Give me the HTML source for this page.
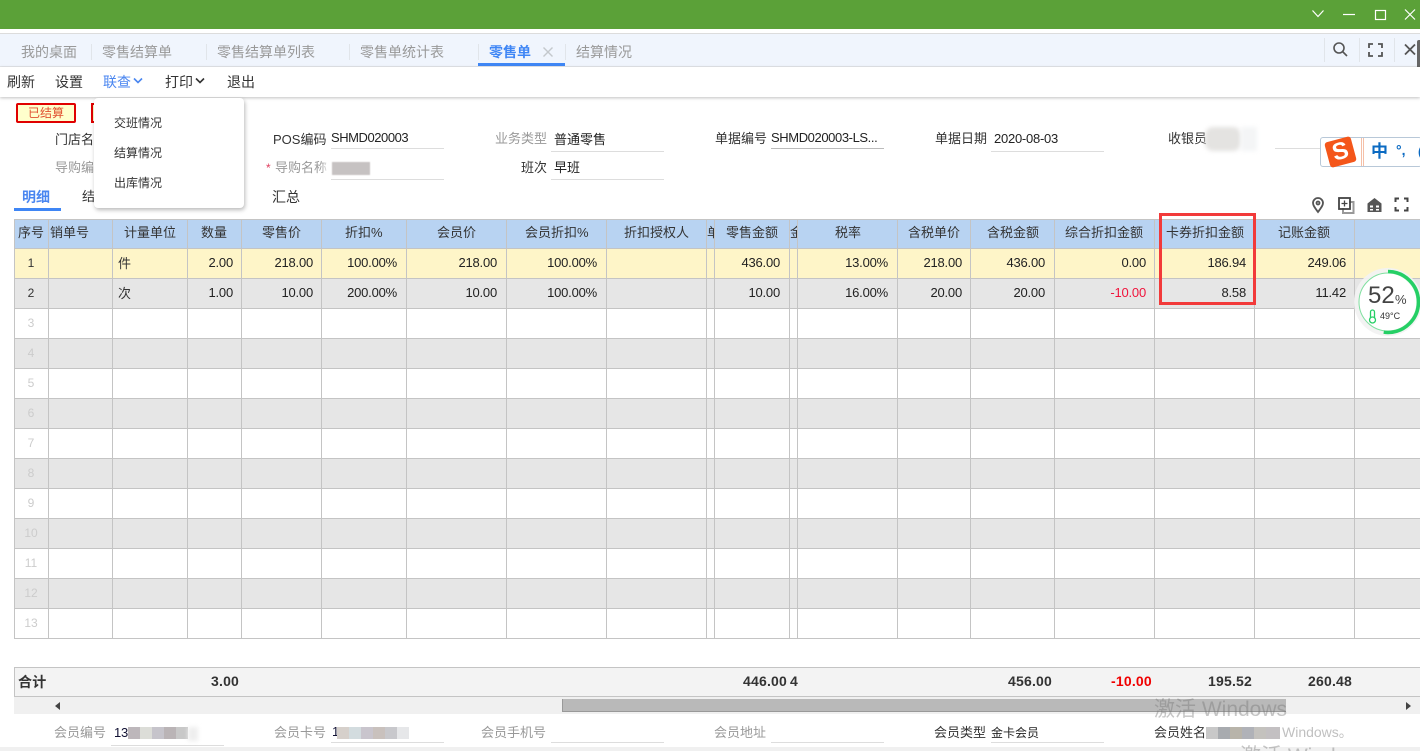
<!DOCTYPE html>
<html lang="zh">
<head>
<meta charset="utf-8">
<title>零售单</title>
<style>
html,body{margin:0;padding:0;background:#fff;}
html{width:1420px;height:751px;overflow:hidden;}
body{width:1420px;height:751px;overflow:hidden;position:relative;font-family:"Liberation Sans","Noto Sans CJK SC",sans-serif;font-size:13px;color:#333;}
div,span{position:absolute;box-sizing:border-box;}
.t{white-space:nowrap;line-height:18px;}
.g{color:#999;}
.tab{font-size:14px;color:#999;top:43px;white-space:nowrap;line-height:18px;}
.sep{width:1px;background:#e1e5ea;top:44px;height:16px;}
.m{font-size:14px;top:73px;color:#333;white-space:nowrap;line-height:18px;}
.ul{height:1px;background:#ddd;}
.v{width:1px;top:219px;height:420px;background:#c4c4c4;}
.h{left:14px;width:1406px;height:1px;background:#c4c4c4;}
.r{left:14px;width:1406px;height:30px;}
.th{top:224px;line-height:18px;white-space:nowrap;text-align:center;color:#333;}
.n{line-height:30px;height:30px;white-space:nowrap;font-size:13px;letter-spacing:-.2px;color:#222;text-align:right;}
.a{top:248px;}
.b{top:278px;}
.idx{left:14px;width:34px;text-align:center;line-height:30px;font-size:12px;color:#ccc;}
.s{line-height:18px;font-weight:bold;font-size:14px;color:#333;white-space:nowrap;letter-spacing:.2px;}
.blur{filter:blur(2px);}
.val{font-size:13px;color:#222;}
</style>
</head>
<body>
<div style="left:0;top:0;width:1420px;height:29px;background:#5ba138;"></div>
<svg style="position:absolute;left:1300px;top:0;" width="120" height="29" fill="none" stroke="#fff" stroke-width="1.2">
<path d="M12.5 10.500l5.500 6 5.500-6"/><path d="M43 14.500h12"/><rect x="75.500" y="10.500" width="10" height="9"/><path d="M105 9.500l10 10m0-10l-10 10"/>
</svg>

<div style="left:0;top:33px;width:1420px;height:34px;background:#f0f5fd;border-top:1px solid #dcdcdc;border-bottom:1px solid #e4e6ea;"></div>
<span class="tab" style="left:21px;">我的桌面</span><div class="sep" style="left:91px;"></div>
<span class="tab" style="left:102px;">零售结算单</span><div class="sep" style="left:206px;"></div>
<span class="tab" style="left:217px;">零售结算单列表</span><div class="sep" style="left:349px;"></div>
<span class="tab" style="left:360px;">零售单统计表</span><div class="sep" style="left:478px;"></div>
<span class="tab" style="left:489px;color:#3f86f5;font-weight:bold;">零售单</span>
<svg style="position:absolute;left:541px;top:45px;" width="14" height="14" fill="none" stroke="#c4c8cc" stroke-width="1.4"><path d="M2.500 2.500l9 9m0-9l-9 9"/></svg>
<div style="left:478px;top:63px;width:87px;height:3px;background:#3f86f5;"></div>
<div class="sep" style="left:565px;"></div>
<span class="tab" style="left:576px;">结算情况</span>
<div class="sep" style="left:1324px;top:38px;height:24px;"></div><div class="sep" style="left:1359px;top:38px;height:24px;"></div><div class="sep" style="left:1394px;top:38px;height:24px;"></div>
<svg style="position:absolute;left:1330px;top:40px;" width="90" height="20" fill="none" stroke="#555" stroke-width="1.6">
<circle cx="9" cy="8" r="5"/><path d="M13 12l4 4"/>
<path d="M39 8V4h4m5 0h4v4m0 4v4h-4m-5 0h-4v-4" stroke-width="1.800"/>
<path d="M75 4.500l10 10m0-10l-10 10" stroke-width="1.800"/>
</svg>
<div style="left:1417px;top:40px;width:3px;height:56px;background:#666;border-radius:2px 0 0 2px;"></div>

<div style="left:0;top:67px;width:1420px;height:30px;background:#fff;box-shadow:0 1px 3px rgba(0,0,0,.25);"></div>
<span class="m" style="left:7px;">刷新</span>
<span class="m" style="left:55px;">设置</span>
<span class="m" style="left:103px;color:#4a86f0;">联查</span>
<svg style="position:absolute;left:133px;top:77px;" width="10" height="8" fill="none" stroke="#4a86f0" stroke-width="1.6"><path d="M1 1.500l4 4 4-4"/></svg>
<span class="m" style="left:165px;">打印</span>
<svg style="position:absolute;left:195px;top:77px;" width="10" height="8" fill="none" stroke="#333" stroke-width="1.6"><path d="M1 1.500l4 4 4-4"/></svg>
<span class="m" style="left:227px;">退出</span>

<div style="left:16px;top:103px;width:60px;height:20px;background:#ffffcc;border:2px solid #e00000;border-radius:2px;text-align:center;line-height:16px;font-size:12px;color:#e05030;">已结算</div>
<div style="left:91px;top:103px;width:10px;height:20px;background:#ffffcc;border:2px solid #e00000;border-right:0;"></div>

<span class="t" style="left:55px;top:131px;">门店名</span>
<span class="t g" style="left:55px;top:159px;">导购编</span>
<span class="t" style="left:273px;top:131px;">POS编码</span>
<span class="t val" style="left:331px;top:129px;letter-spacing:-.45px;">SHMD020003</span>
<div class="ul" style="left:331px;top:148px;width:113px;"></div>
<span class="t" style="left:266px;top:159px;color:#e04060;font-size:12px;">*</span>
<span class="t g" style="left:275px;top:159px;">导购名称</span>
<div style="left:325px;top:153px;width:50px;height:24px;background:#fff;filter:blur(3px);"></div>
<div style="left:332px;top:162px;width:38px;height:13px;background:#c6c2c2;filter:blur(.6px);"></div>
<div class="ul" style="left:331px;top:179px;width:113px;"></div>
<span class="t g" style="left:495px;top:130px;">业务类型</span>
<span class="t val" style="left:554px;top:131px;">普通零售</span>
<div class="ul" style="left:551px;top:151px;width:113px;"></div>
<span class="t" style="left:521px;top:159px;">班次</span>
<span class="t val" style="left:554px;top:159px;">早班</span>
<div class="ul" style="left:551px;top:179px;width:113px;"></div>
<span class="t" style="left:715px;top:130px;">单据编号</span>
<span class="t val" style="left:771px;top:129px;letter-spacing:-.4px;">SHMD020003-LS...</span>
<div class="ul" style="left:771px;top:148px;width:113px;background:#bbb;"></div>
<span class="t" style="left:935px;top:130px;">单据日期</span>
<span class="t val" style="left:994px;top:130px;letter-spacing:-.25px;">2020-08-03</span>
<div class="ul" style="left:991px;top:151px;width:113px;"></div>
<span class="t" style="left:1168px;top:130px;">收银员</span>
<div class="ul" style="left:1275px;top:148px;width:46px;"></div>
<div class="blur" style="left:1205px;top:127px;width:36px;height:24px;background:#e4e3e1;border-radius:8px;"></div>
<div class="blur" style="left:1241px;top:127px;width:16px;height:24px;background:#f4f5f6;"></div>

<span class="t" style="left:22px;top:188px;color:#4a86f0;font-weight:bold;font-size:14px;">明细</span>
<div style="left:14px;top:208px;width:47px;height:3px;background:#3f86f5;"></div>
<span class="t" style="left:82px;top:188px;font-size:13px;">结</span>
<span class="t" style="left:272px;top:188px;font-size:14px;">汇总</span>
<svg style="position:absolute;left:1308px;top:195px;" width="106" height="20" fill="none" stroke="#555" stroke-width="1.800">
<path d="M10 17c-3-4-5-6.500-5-9a5 5 0 0 1 10 0c0 2.500-2 5-5 9z"/><circle cx="10" cy="8" r="1.500"/>
<path d="M41 7h4.500v11H35v-4h-1" stroke="#999" stroke-width="2"/>
<rect x="31" y="3" width="11" height="11" stroke="#444"/><path d="M36.500 5.500v6M33.500 8.500h6" stroke-width="1.300" stroke="#444"/>
<path d="M66.500 3l7 5.500V17h-14V8.500z" fill="#555" stroke="none"/><path d="M62 10.500h3v2h-3zM68 10.500h3v2h-3zM62 14h3v1.500h-3zM68 14h3v1.500h-3z" fill="#fff" stroke="none"/>
<path d="M87.500 7V3.500H91m5 0h3.500V7m0 5v3.500H96m-5 0h-3.500V12" stroke-width="2" stroke="#444"/>
</svg>

<!-- table -->
<div style="left:14px;top:219px;width:1406px;height:29px;background:#b8d3f2;"></div>
<div class="r" style="top:248px;background:#fef5c8;"></div>
<div class="r" style="top:278px;background:#e6e6e6;"></div>
<div class="r" style="top:338px;background:#e6e6e6;"></div>
<div class="r" style="top:398px;background:#e6e6e6;"></div>
<div class="r" style="top:458px;background:#e6e6e6;"></div>
<div class="r" style="top:518px;background:#e6e6e6;"></div>
<div class="r" style="top:578px;background:#e6e6e6;"></div>

<div class="h" style="top:219px;"></div><div class="h" style="top:248px;"></div><div class="h" style="top:278px;"></div><div class="h" style="top:308px;"></div><div class="h" style="top:338px;"></div><div class="h" style="top:368px;"></div><div class="h" style="top:398px;"></div><div class="h" style="top:428px;"></div><div class="h" style="top:458px;"></div><div class="h" style="top:488px;"></div><div class="h" style="top:518px;"></div><div class="h" style="top:548px;"></div><div class="h" style="top:578px;"></div><div class="h" style="top:608px;"></div><div class="h" style="top:638px;"></div>

<div class="v" style="left:14px;"></div><div class="v" style="left:48px;"></div><div class="v" style="left:112px;"></div><div class="v" style="left:187px;"></div><div class="v" style="left:241px;"></div><div class="v" style="left:321px;"></div><div class="v" style="left:406px;"></div><div class="v" style="left:506px;"></div><div class="v" style="left:606px;"></div><div class="v" style="left:706px;"></div><div class="v" style="left:714px;"></div><div class="v" style="left:789px;"></div><div class="v" style="left:797px;"></div><div class="v" style="left:897px;"></div><div class="v" style="left:970px;"></div><div class="v" style="left:1054px;"></div><div class="v" style="left:1154px;"></div><div class="v" style="left:1254px;"></div><div class="v" style="left:1354px;"></div>

<span class="th" style="left:18px;">序号</span>
<span class="th" style="left:50px;">销单号</span>
<span class="th" style="left:124px;">计量单位</span>
<span class="th" style="left:201px;">数量</span>
<span class="th" style="left:262px;">零售价</span>
<span class="th" style="left:345px;">折扣%</span>
<span class="th" style="left:437px;">会员价</span>
<span class="th" style="left:525px;">会员折扣%</span>
<span class="th" style="left:624px;">折扣授权人</span>
<div style="left:707px;top:220px;width:7px;height:28px;overflow:hidden;"><span class="th" style="left:0;top:4px;">单</span></div>
<span class="th" style="left:726px;">零售金额</span>
<div style="left:790px;top:220px;width:7px;height:28px;overflow:hidden;"><span class="th" style="left:0;top:4px;">金</span></div>
<span class="th" style="left:835px;">税率</span>
<span class="th" style="left:908px;">含税单价</span>
<span class="th" style="left:987px;">含税金额</span>
<span class="th" style="left:1065px;">综合折扣金额</span>
<span class="th" style="left:1166px;">卡券折扣金额</span>
<span class="th" style="left:1278px;">记账金额</span>

<span class="idx a" style="color:#333;">1</span>
<span class="idx b" style="color:#333;">2</span>
<span class="t" style="left:118px;top:255px;">件</span>
<span class="t" style="left:118px;top:285px;">次</span>

<span class="n a" style="left:183px;width:50px;">2.00</span><span class="n b" style="left:183px;width:50px;">1.00</span>
<span class="n a" style="left:253px;width:60px;">218.00</span><span class="n b" style="left:253px;width:60px;">10.00</span>
<span class="n a" style="left:327px;width:70px;">100.00%</span><span class="n b" style="left:327px;width:70px;">200.00%</span>
<span class="n a" style="left:437px;width:60px;">218.00</span><span class="n b" style="left:437px;width:60px;">10.00</span>
<span class="n a" style="left:527px;width:70px;">100.00%</span><span class="n b" style="left:527px;width:70px;">100.00%</span>
<span class="n a" style="left:720px;width:60px;">436.00</span><span class="n b" style="left:720px;width:60px;">10.00</span>
<span class="n a" style="left:818px;width:70px;">13.00%</span><span class="n b" style="left:818px;width:70px;">16.00%</span>
<span class="n a" style="left:902px;width:60px;">218.00</span><span class="n b" style="left:902px;width:60px;">20.00</span>
<span class="n a" style="left:985px;width:60px;">436.00</span><span class="n b" style="left:985px;width:60px;">20.00</span>
<span class="n a" style="left:1086px;width:60px;">0.00</span><span class="n b" style="left:1086px;width:60px;color:#f0143c;">-10.00</span>
<span class="n a" style="left:1186px;width:60px;">186.94</span><span class="n b" style="left:1186px;width:60px;">8.58</span>
<span class="n a" style="left:1286px;width:60px;">249.06</span><span class="n b" style="left:1286px;width:60px;">11.42</span>

<span class="idx" style="top:308px;">3</span>
<span class="idx" style="top:338px;">4</span>
<span class="idx" style="top:368px;">5</span>
<span class="idx" style="top:398px;">6</span>
<span class="idx" style="top:428px;">7</span>
<span class="idx" style="top:458px;">8</span>
<span class="idx" style="top:488px;">9</span>
<span class="idx" style="top:518px;">10</span>
<span class="idx" style="top:548px;">11</span>
<span class="idx" style="top:578px;">12</span>
<span class="idx" style="top:608px;">13</span>

<div style="left:1159px;top:213px;width:97px;height:92px;border:3px solid #f23a3a;"></div>

<!-- summary -->
<div style="left:14px;top:667px;width:1406px;height:30px;background:#f3f3f3;border:1px solid #c4c4c4;border-right:0;"></div>
<span class="s" style="left:18px;top:673px;">合计</span>
<span class="s" style="left:211px;top:672px;">3.00</span>
<span class="s" style="left:743px;top:672px;">446.00</span>
<span class="s" style="left:790px;top:672px;">4</span>
<span class="s" style="left:1008px;top:672px;">456.00</span>
<span class="s" style="left:1111px;top:672px;color:#f00000;">-10.00</span>
<span class="s" style="left:1208px;top:672px;">195.52</span>
<span class="s" style="left:1308px;top:672px;">260.48</span>

<!-- scrollbar -->
<div style="left:14px;top:697px;width:1406px;height:17px;background:#f0f0f0;"></div>
<div style="left:562px;top:699px;width:724px;height:13px;background:#b9b9b9;border-bottom:1px solid #999;border-left:1px solid #999;"></div>
<svg style="position:absolute;left:54px;top:701px;" width="8" height="10"><path d="M6 1v8L1 5z" fill="#444"/></svg>
<svg style="position:absolute;left:1405px;top:701px;" width="8" height="10"><path d="M1 1v8l5-4z" fill="#444"/></svg>

<!-- bottom form -->
<div style="left:0;top:747px;width:1420px;height:4px;background:#f0f0f0;"></div>
<span class="t g" style="left:54px;top:724px;">会员编号</span>
<span class="t" style="left:114px;top:724px;font-size:13px;letter-spacing:-.2px;color:#113;">13</span>
<div class="ul" style="left:111px;top:745px;width:113px;"></div>
<div style="left:128px;top:727px;width:60px;height:12px;background:linear-gradient(90deg,#bdb7bb 0 12px,#dcddd8 12px 24px,#c6c4cb 24px 36px,#bab4b6 36px 48px,#c8c8c8 48px 60px);"></div>
<div class="blur" style="left:188px;top:727px;width:10px;height:14px;background:#eee;"></div>
<span class="t g" style="left:274px;top:724px;">会员卡号</span>
<span class="t" style="left:332px;top:723px;font-size:13px;color:#113;">1</span>
<div class="ul" style="left:331px;top:742px;width:113px;"></div>
<div style="left:337px;top:727px;width:72px;height:12px;background:linear-gradient(90deg,#d6d0cb 0 12px,#d3dcdf 12px 24px,#c9c5cd 24px 36px,#c9c1bd 36px 48px,#c8c8cc 48px 60px,#e6e7e9 60px 72px);"></div>
<span class="t g" style="left:481px;top:724px;">会员手机号</span>
<div class="ul" style="left:551px;top:742px;width:113px;"></div>
<span class="t g" style="left:714px;top:724px;">会员地址</span>
<div class="ul" style="left:771px;top:742px;width:113px;"></div>
<span class="t" style="left:934px;top:724px;">会员类型</span>
<span class="t" style="left:991px;top:724px;font-size:12px;color:#222;">金卡会员</span>
<div class="ul" style="left:991px;top:742px;width:113px;"></div>
<span class="t" style="left:1154px;top:724px;">会员姓名</span>
<div style="left:1206px;top:727px;width:74px;height:12px;background:linear-gradient(90deg,#c8c8c8 0 12px,#a8abaf 12px 24px,#b8b4aa 24px 36px,#b0b2b8 36px 48px,#c4c2be 48px 60px,#c3c0c2 60px 74px);"></div>

<!-- watermark -->
<span class="t" style="left:1154px;top:698px;font-size:21px;line-height:24px;color:rgba(120,120,120,.42);">激活 Windows</span>
<span class="t" style="left:1282px;top:723px;font-size:14px;color:rgba(130,130,130,.5);">Windows。</span>
<span class="t" style="left:1240px;top:745px;font-size:21px;line-height:24px;color:rgba(120,120,120,.42);">激活 Wind</span>

<!-- dropdown -->
<div style="left:94px;top:98px;width:150px;height:110px;background:#fff;border-radius:4px;box-shadow:1px 2px 4px rgba(0,0,0,.28);"></div>
<span class="t" style="left:114px;top:114px;font-size:12px;">交班情况</span>
<span class="t" style="left:114px;top:144px;font-size:12px;">结算情况</span>
<span class="t" style="left:114px;top:174px;font-size:12px;">出库情况</span>

<!-- IME bar -->
<div style="left:1320px;top:137px;width:102px;height:30px;background:#fff;border:1px solid #b8c8d8;border-radius:3px;"></div>
<div style="left:1327px;top:139px;width:27px;height:26px;background:#f4561a;border-radius:3px;transform:rotate(-15deg);text-align:center;color:#fff;font-weight:bold;font-size:24px;line-height:26px;">S</div>
<div style="left:1361px;top:138px;width:1px;height:28px;background:#f5c0a8;"></div>
<div style="left:1363px;top:138px;width:1px;height:28px;background:#f5c0a8;"></div>
<span class="t" style="left:1371px;top:143px;font-size:17px;font-weight:bold;color:#0b6ac2;">中</span>
<span class="t" style="left:1396px;top:141px;font-size:14px;font-weight:bold;color:#0b6ac2;">°,</span>
<span class="t" style="left:1418px;top:143px;font-size:13px;font-weight:bold;color:#0b6ac2;">(</span>

<!-- gauge -->
<svg style="position:absolute;left:1352px;top:266px;" width="68" height="74">
<circle cx="36" cy="36" r="34" fill="#f2f2f2" opacity=".95"/>
<circle cx="36" cy="36" r="29" fill="#fff" stroke="#7fdf9f" stroke-width="1"/>
<circle cx="36" cy="36" r="30.500" fill="none" stroke="#25cf65" stroke-width="3.500" stroke-dasharray="100 200" transform="rotate(-90 36 36)"/>
<rect x="18.500" y="44" width="4" height="10" rx="2" fill="#fff" stroke="#25cf65" stroke-width="1.300"/><circle cx="20.500" cy="54" r="3" fill="#fff" stroke="#25cf65" stroke-width="1.300"/>
</svg>
<span class="t" style="left:1368px;top:283px;font-size:24px;line-height:26px;color:#444;">52</span>
<span class="t" style="left:1395px;top:292px;font-size:13px;line-height:16px;color:#444;">%</span>
<span class="t" style="left:1380px;top:309px;font-size:9px;line-height:14px;color:#333;">49°C</span>
</body>
</html>
